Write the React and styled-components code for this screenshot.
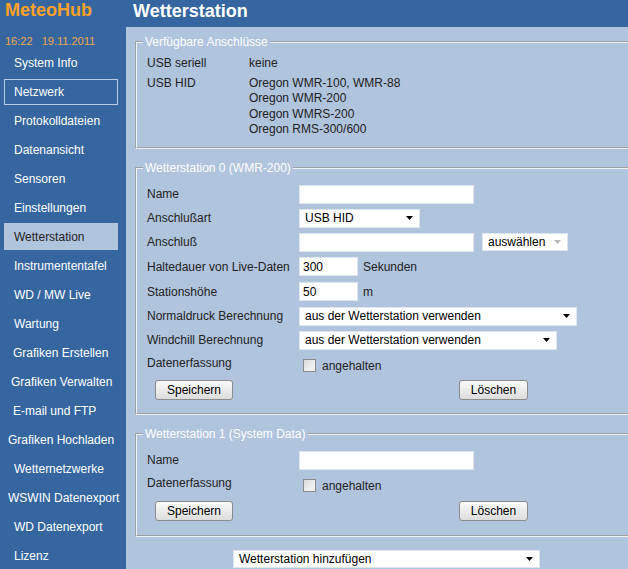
import React from "react";
import styled, { createGlobalStyle } from "styled-components";

const GlobalStyle = createGlobalStyle`
  html, body {
    margin: 0;
    padding: 0;
  }
  body {
    font-family: "Liberation Sans", Arial, sans-serif;
    font-size: 12px;
  }
`;

const menu = [
  { label: "System Info", indent: 10 },
  { label: "Netzwerk", indent: 10, framed: true },
  { label: "Protokolldateien", indent: 10 },
  { label: "Datenansicht", indent: 10 },
  { label: "Sensoren", indent: 10 },
  { label: "Einstellungen", indent: 10 },
  { label: "Wetterstation", indent: 10, active: true },
  { label: "Instrumententafel", indent: 10 },
  { label: "WD / MW Live", indent: 10 },
  { label: "Wartung", indent: 10 },
  { label: "Grafiken Erstellen", indent: 9 },
  { label: "Grafiken Verwalten", indent: 7 },
  { label: "E-mail und FTP", indent: 9 },
  { label: "Grafiken Hochladen", indent: 4 },
  { label: "Wetternetzwerke", indent: 10 },
  { label: "WSWIN Datenexport", indent: 4 },
  { label: "WD Datenexport", indent: 10 },
  { label: "Lizenz", indent: 10 },
];

const Arrow = ({ muted }) => (
  <svg width="7" height="4" viewBox="0 0 7 4">
    <path d="M0 0 H7 L3.5 4 Z" fill={muted ? "#b8b8b8" : "#000"} />
  </svg>
);

const Select = ({ width, height, muted, children }) => (
  <SelectBox $width={width} $height={height}>
    <span>{children}</span>
    <Arrow muted={muted} />
  </SelectBox>
);

const Check = () => (
  <CheckWrap>
    <CheckBox />
    <span>angehalten</span>
  </CheckWrap>
);

const App = () => {
  return (
    <>
      <GlobalStyle />
      <Page>
        <Sidebar>
          <Brand>MeteoHub</Brand>
          <Clock>{"16:22   19.11.2011"}</Clock>
          <Menu>
            {menu.map((m) => (
              <MenuItem key={m.label}>
                <MenuLink $indent={m.indent} $active={m.active} $framed={m.framed}>
                  {m.label}
                </MenuLink>
              </MenuItem>
            ))}
          </Menu>
        </Sidebar>

        <Main>
          <Header>Wetterstation</Header>
          <Panel>
            <Fieldset $top={7} $bottom={10}>
              <Legend>Verfügbare Anschlüsse</Legend>
              <PortGrid>
                <span>USB seriell</span>
                <span>keine</span>
                <span>USB HID</span>
                <PortList>
                  <span>Oregon WMR-100, WMR-88</span>
                  <span>Oregon WMR-200</span>
                  <span>Oregon WMRS-200</span>
                  <span>Oregon RMS-300/600</span>
                </PortList>
              </PortGrid>
            </Fieldset>

            <Fieldset $top={7} $bottom={13} $gap>
              <Legend>Wetterstation 0 (WMR-200)</Legend>
              <Row>
                <Label>Name</Label>
                <Input $width={175} />
              </Row>
              <Row>
                <Label>Anschlußart</Label>
                <Select width={121}>USB HID</Select>
              </Row>
              <Row>
                <Label>Anschluß</Label>
                <Inline>
                  <Input $width={175} />
                  <Select width={86} height={18} muted>
                    auswählen
                  </Select>
                </Inline>
              </Row>
              <Row $height={25}>
                <Label>Haltedauer von Live-Daten</Label>
                <Inline $gap={5}>
                  <Input $width={59} defaultValue="300" />
                  <span>Sekunden</span>
                </Inline>
              </Row>
              <Row $height={25}>
                <Label>Stationshöhe</Label>
                <Inline $gap={5}>
                  <Input $width={59} defaultValue="50" />
                  <span>m</span>
                </Inline>
              </Row>
              <Row>
                <Label>Normaldruck Berechnung</Label>
                <Select width={278}>aus der Wetterstation verwenden</Select>
              </Row>
              <Row>
                <Label>Windchill Berechnung</Label>
                <Select width={258}>aus der Wetterstation verwenden</Select>
              </Row>
              <Row>
                <Label $raise>Datenerfassung</Label>
                <Check />
              </Row>
              <Buttons>
                <Button $width={78}>Speichern</Button>
                <Button $width={69}>Löschen</Button>
              </Buttons>
            </Fieldset>

            <Fieldset $top={7} $bottom={14} $gap>
              <Legend>Wetterstation 1 (System Data)</Legend>
              <Row>
                <Label>Name</Label>
                <Input $width={175} />
              </Row>
              <Row>
                <Label $raise>Datenerfassung</Label>
                <Check />
              </Row>
              <Buttons $top={5}>
                <Button $width={78}>Speichern</Button>
                <Button $width={69}>Löschen</Button>
              </Buttons>
            </Fieldset>

            <AddRow>
              <Select width={307} height={18}>
                Wetterstation hinzufügen
              </Select>
            </AddRow>
          </Panel>
        </Main>
      </Page>
    </>
  );
};

const Page = styled.div`
  display: grid;
  grid-template-columns: 126px 1fr;
  width: 628px;
  height: 569px;
  overflow: hidden;
  background: #3566a0;
`;

const Sidebar = styled.nav`
  display: flex;
  flex-direction: column;
  width: 127px;
  overflow: hidden;
  background: #3566a0;
`;

const Brand = styled.div`
  padding-left: 5px;
  height: 21px;
  line-height: 21px;
  font-size: 18px;
  font-weight: bold;
  color: #ffa126;
`;

const Clock = styled.div`
  margin-top: 13px;
  padding-left: 5px;
  height: 14px;
  line-height: 14px;
  font-size: 11px;
  color: #f2a64a;
  white-space: pre;
`;

const Menu = styled.ul`
  list-style: none;
  margin: 0;
  padding: 0;
`;

const MenuItem = styled.li`
  display: flex;
  align-items: center;
  height: 29px;
`;

const MenuLink = styled.div`
  display: flex;
  align-items: center;
  box-sizing: border-box;
  width: ${(p) => (p.$active || p.$framed ? "114px" : "auto")};
  height: ${(p) => (p.$active ? "27px" : "26px")};
  margin-left: 4px;
  padding-left: ${(p) => p.$indent - (p.$framed ? 1 : 0)}px;
  border: ${(p) => (p.$framed ? "1px solid #b7cbe4" : "none")};
  background: ${(p) => (p.$active ? "#b0c4de" : "transparent")};
  color: ${(p) => (p.$active ? "#222" : "#fff")};
  font-size: 12px;
  white-space: nowrap;
`;

const Main = styled.main`
  display: flex;
  flex-direction: column;
  min-width: 0;
`;

const Header = styled.h1`
  margin: 0;
  height: 27px;
  padding-left: 7px;
  line-height: 22px;
  font-size: 18px;
  font-weight: bold;
  color: #fff;
  background: #3566a0;
`;

const Panel = styled.section`
  flex: 1;
  display: flex;
  flex-direction: column;
  padding: 8px 0 0 9px;
  background: #b0c4de;
  color: #222;
  overflow: hidden;
`;

const Fieldset = styled.fieldset`
  box-sizing: border-box;
  width: 530px;
  min-width: 0;
  margin: ${(p) => (p.$gap ? "12px" : "0")} 0 0 0;
  padding: ${(p) => p.$top}px 10px ${(p) => p.$bottom}px 10px;
  border: 2px groove #eef2f7;
`;

const Legend = styled.legend`
  margin-left: -4px;
  padding: 0 2px;
  line-height: 14px;
  font-size: 12px;
  color: #fff;
`;

const PortGrid = styled.div`
  display: grid;
  grid-template-columns: 102px auto;
  grid-template-rows: 20px auto;
  line-height: 15px;
`;

const PortList = styled.div`
  display: flex;
  flex-direction: column;
  line-height: 15.3px;
`;

const Row = styled.div`
  display: grid;
  grid-template-columns: 152px auto;
  align-items: center;
  height: ${(p) => p.$height ?? 24}px;
`;

const Label = styled.span`
  position: relative;
  top: ${(p) => (p.$raise ? "-1px" : "0")};
`;

const Inline = styled.div`
  display: flex;
  align-items: center;
  gap: ${(p) => p.$gap ?? 8}px;
`;

const Input = styled.input`
  box-sizing: border-box;
  width: ${(p) => p.$width}px;
  height: 19px;
  margin: 0;
  padding: 0 3px;
  border: 1px solid #dde5ef;
  background: #fff;
  font-family: "Liberation Sans", Arial, sans-serif;
  font-size: 12px;
  color: #000;
  outline: none;
`;

const SelectBox = styled.div`
  box-sizing: border-box;
  display: flex;
  align-items: center;
  justify-content: space-between;
  width: ${(p) => p.$width}px;
  height: ${(p) => p.$height ?? 19}px;
  padding: 0 6px 0 5px;
  border: 1px solid #dde5ef;
  background: #fff;
  color: #000;
  font-size: 12px;
  white-space: nowrap;
`;

const CheckWrap = styled.div`
  display: flex;
  align-items: center;
  gap: 6px;
  margin-left: 4px;
  padding-top: 3px;
`;

const CheckBox = styled.span`
  box-sizing: border-box;
  width: 13px;
  height: 13px;
  border: 1px solid #8a8a8a;
  background: linear-gradient(135deg, #dcdcdc, #fafafa);
`;

const Buttons = styled.div`
  display: grid;
  grid-template-columns: 304px auto;
  margin: ${(p) => p.$top ?? 4}px 0 0 8px;
`;

const Button = styled.button`
  box-sizing: border-box;
  width: ${(p) => p.$width}px;
  height: 20px;
  padding: 0;
  border: 1px solid #8c8c8c;
  border-radius: 3px;
  background: linear-gradient(#fbfbfb, #dcdcdc);
  font-family: "Liberation Sans", Arial, sans-serif;
  font-size: 12px;
  color: #000;
`;

const AddRow = styled.div`
  margin: 13px 0 0 98px;
`;

export default App;
